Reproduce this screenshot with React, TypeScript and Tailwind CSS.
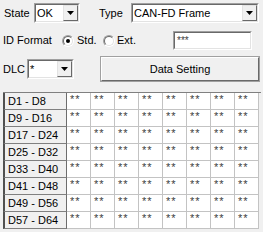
import React from "react";

const Arrow = () => (
  <svg width="7" height="4" viewBox="0 0 7 4"><path d="M0 0h7L3.5 4z" fill="#000" /></svg>
);

function Sunken({ className, children }: { className: string; children?: React.ReactNode }) {
  return (
    <div className={"border border-t-[#a0a0a0] border-l-[#a0a0a0] border-b-white border-r-white " + className}>
      <div className="w-full h-full border border-t-[#696969] border-l-[#696969] border-b-[#e3e3e3] border-r-[#e3e3e3] bg-white flex items-center">
        {children}
      </div>
    </div>
  );
}

function Combo({ className, text }: { className: string; text: string }) {
  return (
    <Sunken className={className}>
      <span className="flex-1 pl-[1px] leading-none">{text}</span>
      <div className="w-[15px] h-full border border-t-[#e3e3e3] border-l-[#e3e3e3] border-b-[#696969] border-r-[#696969] bg-[#f0f0f0] flex items-center justify-center">
        <Arrow />
      </div>
    </Sunken>
  );
}

function Radio({ checked }: { checked?: boolean }) {
  return (
    <div className="w-[12px] h-[12px] rounded-full border border-t-[#a0a0a0] border-l-[#a0a0a0] border-b-white border-r-white">
      <div className="w-full h-full rounded-full border border-t-[#696969] border-l-[#696969] border-b-[#e3e3e3] border-r-[#e3e3e3] bg-white flex items-center justify-center">
        {checked && <div className="w-[4px] h-[4px] rounded-full bg-black" />}
      </div>
    </div>
  );
}

const rows = ["D1 - D8", "D9 - D16", "D17 - D24", "D25 - D32", "D33 - D40", "D41 - D48", "D49 - D56", "D57 - D64"];

export default function App() {
  return (
    <div className="w-[263px] h-[232px] bg-[#f0f0f0] text-[11px] text-black overflow-hidden antialiased" style={{ fontFamily: '"Liberation Sans", Arial, sans-serif' }}>
      <div className="h-[3px]" />
      <div className="flex items-center h-[20px]">
        <span className="ml-[4px] w-[30px]">State</span>
        <Combo className="w-[46px] h-[20px]" text="OK" />
        <span className="ml-[19px] w-[32px]">Type</span>
        <Combo className="w-[128px] h-[20px]" text="CAN-FD Frame" />
      </div>
      <div className="flex items-center h-[19px] mt-[8px]">
        <span className="ml-[3px] w-[59px]">ID Format</span>
        <Radio checked />
        <span className="ml-[3px] w-[26px]">Std.</span>
        <Radio />
        <span className="ml-[2px] w-[56px]">Ext.</span>
        <Sunken className="w-[79px] h-[19px]">
          <span className="pl-[2px] text-[10px] leading-none text-[#404040]">***</span>
        </Sunken>
      </div>
      <div className="flex items-center h-[24px] mt-[7px]">
        <span className="ml-[3px] w-[24px]">DLC</span>
        <Combo className="w-[47px] h-[20px]" text="*" />
        <button className="ml-[27px] w-[158px] h-[24px] bg-[#f0f0f0] border border-t-white border-l-white border-b-[#696969] border-r-[#696969] outline outline-1 outline-[#a0a0a0] text-[11px]">
          Data Setting
        </button>
      </div>
      <div className="mt-[11px] ml-[3px] flex flex-col border-t border-[#808080] w-[258px]">
        {rows.map((r) => (
          <div key={r} className="flex h-[17px]">
            <div className="w-[64px] h-full bg-[#f0f0f0] border-l-2 border-l-[#505050] border-r border-r-[#6d6d6d] border-b border-b-[#808080] pl-[3px] leading-[16px]">
              {r}
            </div>
            {Array.from({ length: 8 }).map((_, i) => (
              <div key={i} className="w-[24px] h-full bg-white border-r border-b border-[#c3c3c3] pl-[3px] text-[11px] leading-[12px] tracking-[1px] text-[#404040]">
                **
              </div>
            ))}
          </div>
        ))}
      </div>
    </div>
  );
}
